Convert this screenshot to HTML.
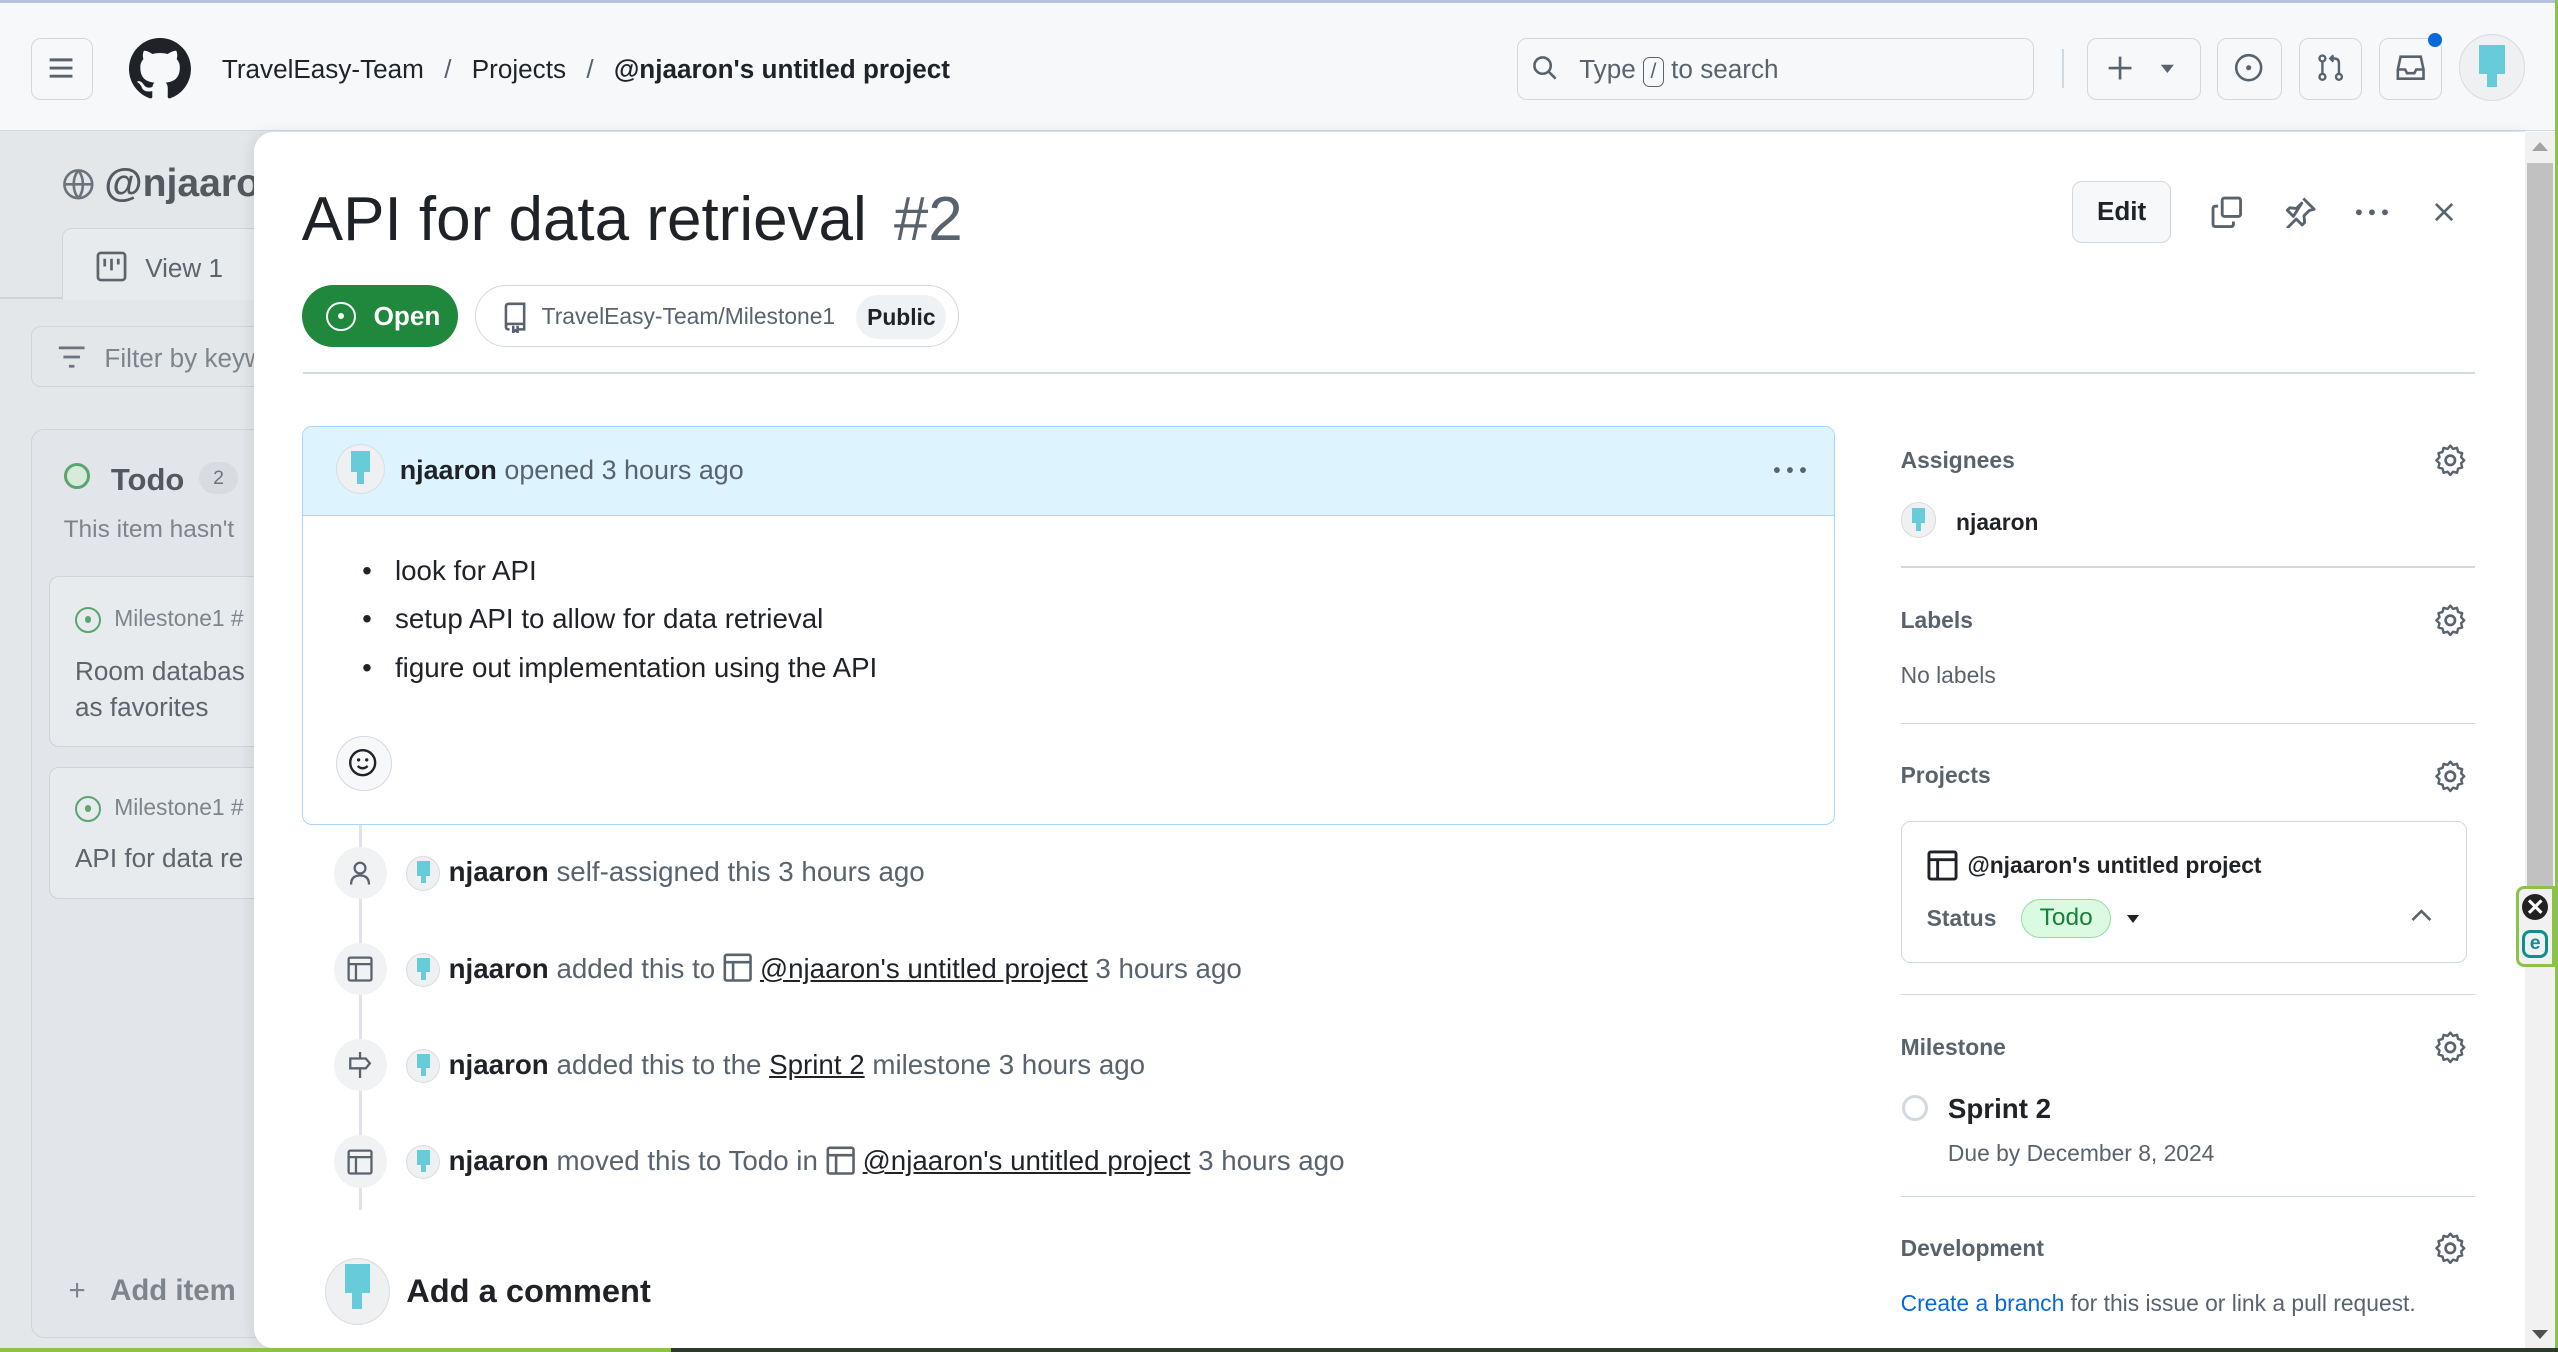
<!DOCTYPE html>
<html><head><meta charset="utf-8"><style>
html,body{margin:0;padding:0;width:2558px;height:1352px;overflow:hidden;background:#fff}
#z{zoom:1.6314;width:1568px;height:829px;position:relative;overflow:hidden;font-family:"Liberation Sans",sans-serif;color:#1f2328;font-size:14px}
.a{position:absolute}
.btn{position:absolute;border:1px solid #d1d9e0;border-radius:6px;background:#f6f8fa;box-sizing:border-box}
svg{display:block}
.av{position:absolute;border-radius:50%;background:#eef0f2;border:1px solid #d8dde2;box-sizing:border-box;overflow:hidden}
.av i{position:absolute;left:30%;top:12%;width:40%;height:45%;background:#67cbd9}
.av b{position:absolute;left:42%;top:55%;width:16%;height:25%;background:#67cbd9}
.side h4{position:absolute;margin:0;font-size:14px;font-weight:bold;color:#59636e;left:1165px}
.sep{position:absolute;left:1165px;width:352px;height:1px;background:#d1d9e0}
.gear{position:absolute;left:1492px}
.tl{position:absolute;left:205px;width:32px;height:32px;border-radius:50%;background:#f0f2f4}
.tl svg{margin:8px}
.tt{position:absolute;left:249px;font-size:17px;color:#59636e;white-space:nowrap}
.tt b{color:#1f2328}
.tt u{color:#1f2328;text-decoration:underline}
</style></head><body><div id="z">
<div class="a" style="left:0;top:0;width:1568px;height:80px;background:#f6f8fa;border-bottom:1px solid #d1d9e0;border-top:2px solid #b4c2dc;box-sizing:border-box"></div>
<div class="btn" style="left:19px;top:23px;width:38px;height:38px;background:#f6f8fa"><svg width="16" height="16" viewBox="0 0 16 16" style="margin:10px"><path d="M1 3h14M1 8h14M1 13h14" stroke="#59636e" stroke-width="1.8"/></svg></div>
<svg class="a" style="left:79px;top:23px" width="38" height="38" viewBox="0 0 16 16"><path fill="#1f2328" d="M8 0C3.58 0 0 3.58 0 8c0 3.540 2.290 6.530 5.470 7.590.4.07.55-.17.55-.38 0-.19-.01-.82-.01-1.49-2.010.37-2.530-.49-2.690-.94-.09-.23-.48-.94-.82-1.130-.28-.15-.68-.52-.01-.53.63-.01 1.080.58 1.230.82.72 1.210 1.870.87 2.330.66.07-.52.28-.87.51-1.070-1.780-.2-3.640-.89-3.640-3.950 0-.87.31-1.590.82-2.150-.08-.2-.36-1.020.08-2.120 0 0 .67-.21 2.200.82.64-.18 1.320-.27 2-.27.68 0 1.360.09 2 .27 1.530-1.040 2.200-.82 2.200-.82.44 1.100.16 1.920.08 2.120.51.56.82 1.270.82 2.150 0 3.070-1.870 3.750-3.650 3.950.29.25.54.73.54 1.480 0 1.070-.01 1.930-.01 2.200 0 .21.15.46.55.38A8.013 8.013 0 0016 8c0-4.420-3.580-8-8-8z"/></svg>
<div class="a" style="left:136px;top:33px;font-size:16px;white-space:nowrap">TravelEasy-Team <span style="color:#59636e;margin:0 8px">/</span> Projects <span style="color:#59636e;margin:0 8px">/</span> <b>@njaaron's untitled project</b></div>
<div class="a" style="left:930px;top:23px;width:317px;height:38px;border:1px solid #d1d9e0;border-radius:6px;box-sizing:border-box;background:#f6f8fa"></div>
<svg class="a" style="left:939px;top:34px" width="16" height="16" viewBox="0 0 16 16"><circle cx="6.5" cy="6.5" r="5" fill="none" stroke="#59636e" stroke-width="1.6"/><path d="M10.2 10.2L14.5 14.5" stroke="#59636e" stroke-width="1.6"/></svg>
<div class="a" style="left:968px;top:33px;font-size:16px;color:#59636e;white-space:nowrap">Type <span style="display:inline-block;border:1px solid #59636e;border-radius:4px;padding:0 4px;font-size:13px;line-height:17px">/</span> to search</div>
<div class="a" style="left:1264px;top:30px;width:1px;height:24px;background:#d1d9e0"></div>
<div class="btn" style="left:1279px;top:23px;width:70px;height:38px"><svg width="60" height="16" viewBox="0 0 60 16" style="margin:10px 0 0 12px"><path d="M8 1v14M1 8h14" stroke="#59636e" stroke-width="1.6"/><path d="M33 6h8l-4 5z" fill="#59636e"/></svg></div>
<div class="btn" style="left:1359px;top:23px;width:40px;height:38px"><svg width="18" height="18" viewBox="0 0 16 16" style="margin:9px 10px"><circle cx="8" cy="8" r="6.8" fill="none" stroke="#59636e" stroke-width="1.4"/><circle cx="8" cy="8" r="1.4" fill="#59636e"/></svg></div>
<div class="btn" style="left:1409px;top:23px;width:39px;height:38px"><svg width="18" height="18" viewBox="0 0 16 16" style="margin:9px 10px"><circle cx="3.5" cy="3" r="1.6" fill="none" stroke="#59636e" stroke-width="1.3"/><circle cx="3.5" cy="13" r="1.6" fill="none" stroke="#59636e" stroke-width="1.3"/><circle cx="12.5" cy="13" r="1.6" fill="none" stroke="#59636e" stroke-width="1.3"/><path d="M3.5 4.6v6.8M12.5 11.4V5.5Q12.5 3 10 3H8M9.5 1.3 7.8 3l1.7 1.7" fill="none" stroke="#59636e" stroke-width="1.3"/></svg></div>
<div class="btn" style="left:1458px;top:23px;width:39px;height:38px"><svg width="18" height="18" viewBox="0 0 16 16" style="margin:9px 10px"><path d="M2.5 2h11l1.5 7v5H1V9zM1 9h4l1 2h4l1-2h4" fill="none" stroke="#59636e" stroke-width="1.4"/></svg></div>
<div class="a" style="left:1488px;top:20px;width:9px;height:9px;border-radius:50%;background:#0969da"></div>
<div class="av" style="left:1507px;top:21px;width:41px;height:41px"><i style="top:15%"></i><b></b></div>
<div class="a" style="left:1566px;top:0;width:2px;height:829px;background:#8bc34a"></div>

<div class="a" style="left:0;top:80px;width:1548px;height:749px;background:#e4e7ea"></div>
<svg class="a" style="left:38px;top:103px" width="20" height="20" viewBox="0 0 16 16"><circle cx="8" cy="8" r="6.8" fill="none" stroke="#6b737c" stroke-width="1.3"/><path d="M1.2 8h13.6M8 1.2c-3 3.5-3 10 0 13.6M8 1.2c3 3.5 3 10 0 13.6" fill="none" stroke="#6b737c" stroke-width="1.3"/></svg>
<div class="a" style="left:64px;top:99px;font-size:24px;font-weight:bold;color:#53595f">@njaaron</div>
<div class="a" style="left:0;top:182px;width:38px;height:1px;background:#cfd4d9"></div>
<div class="a" style="left:38px;top:140px;width:140px;height:44px;border:1px solid #cfd4d9;border-bottom:none;border-radius:6px 6px 0 0;background:#e8ebee;box-sizing:border-box"></div>
<svg class="a" style="left:59px;top:154px" width="19" height="19" viewBox="0 0 16 16"><rect x="1" y="1" width="14" height="14" rx="1.5" fill="none" stroke="#5d646b" stroke-width="1.4"/><path d="M4.5 4v4M8 4v6M11.5 4v3" stroke="#5d646b" stroke-width="1.4"/></svg>
<div class="a" style="left:89px;top:155px;font-size:16px;color:#5d646b">View 1</div>
<div class="a" style="left:19px;top:200px;width:160px;height:37px;border:1px solid #cfd4d9;border-radius:6px;box-sizing:border-box"></div>
<svg class="a" style="left:35px;top:211px" width="18" height="16" viewBox="0 0 16 14"><path d="M1 2h14M3.5 7h9M6.5 12h3" stroke="#6b737c" stroke-width="1.5"/></svg>
<div class="a" style="left:64px;top:210px;font-size:16px;color:#7d858c;white-space:nowrap">Filter by keyword</div>
<div class="a" style="left:19px;top:263px;width:160px;height:557px;border:1px solid #cfd4d9;border-radius:8px;box-sizing:border-box;background:#e2e5e9"></div>
<div class="a" style="left:39px;top:284px;width:16px;height:16px;border:2px solid #5aa56f;border-radius:50%;box-sizing:border-box;background:#d6ebd9"></div>
<div class="a" style="left:68px;top:283px;font-size:19px;font-weight:bold;color:#53595f">Todo</div>
<div class="a" style="left:122px;top:283px;width:24px;height:20px;border-radius:10px;background:#d8dce0;font-size:12px;color:#6b737c;text-align:center;line-height:20px">2</div>
<div class="a" style="left:39px;top:316px;font-size:15px;color:#7d858c;white-space:nowrap">This item hasn't</div>
<div class="a" style="left:30px;top:353px;width:150px;height:105px;border:1px solid #cfd4d9;border-radius:6px;background:#e8ebee;box-sizing:border-box"></div>
<div class="a" style="left:30px;top:470px;width:150px;height:81px;border:1px solid #cfd4d9;border-radius:6px;background:#e8ebee;box-sizing:border-box"></div>
<div class="a" style="left:46px;top:372px;width:16px;height:16px;border:1.5px solid #5aa56f;border-radius:50%;box-sizing:border-box"><div style="width:4px;height:4px;background:#5aa56f;border-radius:50%;margin:4.5px auto"></div></div>
<div class="a" style="left:70px;top:371px;font-size:14px;color:#7d858c;white-space:nowrap">Milestone1 #</div>
<div class="a" style="left:46px;top:401px;font-size:16px;color:#5d646b;line-height:22px;white-space:nowrap">Room databas<br>as favorites</div>
<div class="a" style="left:46px;top:488px;width:16px;height:16px;border:1.5px solid #5aa56f;border-radius:50%;box-sizing:border-box"><div style="width:4px;height:4px;background:#5aa56f;border-radius:50%;margin:4.5px auto"></div></div>
<div class="a" style="left:70px;top:487px;font-size:14px;color:#7d858c;white-space:nowrap">Milestone1 #</div>
<div class="a" style="left:46px;top:517px;font-size:16px;color:#5d646b;white-space:nowrap">API for data re</div>
<div class="a" style="left:42px;top:781px;font-size:18px;color:#7d858c;white-space:nowrap">+&nbsp;&nbsp; <b>Add item</b></div>

<div class="a" style="left:156px;top:81px;width:1392px;height:745px;background:#fff;border-radius:12px 0 0 12px;box-shadow:-2px 0 8px rgba(0,0,0,.08)"></div>
<div class="a" style="left:1548px;top:81px;width:18px;height:748px;background:#f1f1f1"></div>
<div class="a" style="left:1549px;top:100px;width:16px;height:445px;background:#c1c1c1"></div>
<div class="a" style="left:1552px;top:87px;width:0;height:0;border:5px solid transparent;border-bottom:6px solid #a3a3a3;border-top:none"></div>
<div class="a" style="left:1552px;top:815px;width:0;height:0;border:5px solid transparent;border-top:6px solid #505050;border-bottom:none"></div>
<div class="a" style="left:1542px;top:543px;width:24px;height:50px;border:2px solid #8bc34a;border-radius:5px 0 0 5px;background:#f1f1f1;box-sizing:border-box"></div>
<div class="a" style="left:1546px;top:548px;width:16px;height:16px;border-radius:50%;background:#222;color:#fff;font-size:14px;font-weight:bold;text-align:center;line-height:16px">✕</div>
<div class="a" style="left:1546px;top:570px;width:16px;height:17px;border:2px solid #0f8f8f;border-radius:5px;box-sizing:border-box;color:#0f8f8f;font-size:12px;font-weight:bold;text-align:center;line-height:13px">e</div>

<div class="a" style="left:185px;top:113px;font-size:38px;white-space:nowrap">API for data retrieval <span style="color:#59636e;font-weight:300;margin-left:6px">#2</span></div>
<div class="btn" style="left:1270px;top:111px;width:61px;height:38px;font-size:16px;font-weight:bold;text-align:center;line-height:36px">Edit</div>
<svg class="a" style="left:1355px;top:120px" width="20" height="20" viewBox="0 0 16 16"><rect x="5.5" y="1" width="9" height="9" rx="1" fill="none" stroke="#59636e" stroke-width="1.4"/><path d="M3.5 5H2.2Q1 5 1 6.2v7.6Q1 15 2.2 15h7.6Q11 15 11 13.8V12.5" fill="none" stroke="#59636e" stroke-width="1.4"/></svg>
<svg class="a" style="left:1400px;top:120px" width="20" height="20" viewBox="0 0 16 16"><path d="M9.5 1.2l5.3 5.3-2.4.6-2.6 2.6.3 3.3-1.2 1.2L6 11.3l-4.5 4.5M4.6 10l-3-3 1.2-1.2 3.3.3 2.6-2.6z" fill="none" stroke="#59636e" stroke-width="1.4" stroke-linejoin="round"/></svg>
<svg class="a" style="left:1443px;top:120px" width="22" height="20" viewBox="0 0 22 20"><circle cx="3" cy="10" r="1.8" fill="#59636e"/><circle cx="11" cy="10" r="1.8" fill="#59636e"/><circle cx="19" cy="10" r="1.8" fill="#59636e"/></svg>
<svg class="a" style="left:1490px;top:122px" width="16" height="16" viewBox="0 0 16 16"><path d="M3 3l10 10M13 3L3 13" stroke="#59636e" stroke-width="1.6"/></svg>

<div class="a" style="left:185px;top:175px;width:96px;height:38px;border-radius:19px;background:#1f883d;color:#fff;font-size:16px;font-weight:bold;box-sizing:border-box;padding-left:44px;line-height:38px">Open</div>
<div class="a" style="left:200px;top:185px;width:18px;height:18px;border:1.6px solid #fff;border-radius:50%;box-sizing:border-box"><div style="width:4px;height:4px;background:#fff;border-radius:50%;margin:5.5px auto"></div></div>
<div class="a" style="left:291px;top:175px;width:297px;height:38px;border:1px solid #d1d9e0;border-radius:19px;box-sizing:border-box"></div>
<svg class="a" style="left:308px;top:185px" width="16" height="19" viewBox="0 0 14 17"><path d="M2 14V2.5Q2 1 3.5 1H12v11H3.5Q2 12 2 13.5Q2 15 3.5 15H4M6 13v3.5l1.2-1 1.2 1V13M12 12v3H9" fill="none" stroke="#59636e" stroke-width="1.4"/></svg>
<div class="a" style="left:332px;top:186px;font-size:14px;color:#59636e;white-space:nowrap">TravelEasy-Team/Milestone1</div>
<div class="a" style="left:525px;top:181px;width:55px;height:27px;border-radius:14px;background:#eff2f5;font-size:14px;font-weight:bold;text-align:center;line-height:27px">Public</div>
<div class="a" style="left:186px;top:228px;width:1331px;height:1px;background:#d1d9e0"></div>

<div class="a" style="left:185px;top:261px;width:940px;height:245px;border:1px solid #a8d6fa;border-radius:6px;box-sizing:border-box;overflow:hidden">
<div style="height:54px;background:#ddf4ff;border-bottom:1px solid #a8d6fa"></div></div>
<div class="av" style="left:206px;top:272px;width:30px;height:31px"><i></i><b></b></div>
<div class="a" style="left:245px;top:279px;font-size:16.5px;color:#59636e;white-space:nowrap"><b style="color:#1f2328">njaaron</b> opened 3 hours ago</div>
<svg class="a" style="left:1086px;top:280px" width="22" height="16" viewBox="0 0 22 16"><circle cx="3" cy="8" r="1.8" fill="#59636e"/><circle cx="11" cy="8" r="1.8" fill="#59636e"/><circle cx="19" cy="8" r="1.8" fill="#59636e"/></svg>
<div class="a" style="left:222px;top:335px;font-size:17px;line-height:30px;white-space:nowrap">
<div>•&nbsp;&nbsp; look for API</div><div>•&nbsp;&nbsp; setup API to allow for data retrieval</div><div>•&nbsp;&nbsp; figure out implementation using the API</div></div>
<div class="a" style="left:206px;top:451px;width:34px;height:34px;border:1px solid #d1d9e0;border-radius:50%;background:#f6f8fa;box-sizing:border-box"><svg width="18" height="18" viewBox="0 0 16 16" style="margin:7px"><circle cx="8" cy="8" r="6.8" fill="none" stroke="#1f2328" stroke-width="1.3"/><circle cx="5.8" cy="6.5" r=".9" fill="#1f2328"/><circle cx="10.2" cy="6.5" r=".9" fill="#1f2328"/><path d="M5.3 9.8Q8 12.3 10.7 9.8" fill="none" stroke="#1f2328" stroke-width="1.3"/></svg></div>

<div class="a" style="left:220px;top:506px;width:2px;height:236px;background:#dfe3e8"></div>
<div class="tl" style="top:519px"><svg width="16" height="16" viewBox="0 0 16 16"><circle cx="8" cy="5" r="3.3" fill="none" stroke="#59636e" stroke-width="1.4"/><path d="M2.5 15q0-5.5 5.5-5.5t5.5 5.5" fill="none" stroke="#59636e" stroke-width="1.4"/></svg></div>
<div class="tl" style="top:578px"><svg width="16" height="16" viewBox="0 0 16 16"><rect x="1" y="1" width="14" height="14" rx="1" fill="none" stroke="#59636e" stroke-width="1.4"/><path d="M1 5h14M5.5 5v10" stroke="#59636e" stroke-width="1.4"/></svg></div>
<div class="tl" style="top:637px"><svg width="16" height="16" viewBox="0 0 16 16"><path d="M8 0v4M8 10v6M2 4h9.5l2.5 3-2.5 3H2z" fill="none" stroke="#59636e" stroke-width="1.4"/></svg></div>
<div class="tl" style="top:696px"><svg width="16" height="16" viewBox="0 0 16 16"><rect x="1" y="1" width="14" height="14" rx="1" fill="none" stroke="#59636e" stroke-width="1.4"/><path d="M1 5h14M5.5 5v10" stroke="#59636e" stroke-width="1.4"/></svg></div>
<div class="av" style="left:249px;top:525px;width:21px;height:21px"><i></i><b></b></div>
<div class="av" style="left:249px;top:584px;width:21px;height:21px"><i></i><b></b></div>
<div class="av" style="left:249px;top:643px;width:21px;height:21px"><i></i><b></b></div>
<div class="av" style="left:249px;top:702px;width:21px;height:21px"><i></i><b></b></div>
<div class="tt" style="left:275px;top:525px"><b>njaaron</b> self-assigned this 3 hours ago</div>
<div class="tt" style="left:275px;top:584px"><b>njaaron</b> added this to <svg style="display:inline;vertical-align:-3px" width="18" height="18" viewBox="0 0 16 16"><rect x="1" y="1" width="14" height="14" rx="1" fill="none" stroke="#59636e" stroke-width="1.4"/><path d="M1 5h14M5.5 5v10" stroke="#59636e" stroke-width="1.4"/></svg> <u>@njaaron's untitled project</u> 3 hours ago</div>
<div class="tt" style="left:275px;top:643px"><b>njaaron</b> added this to the <u>Sprint 2</u> milestone 3 hours ago</div>
<div class="tt" style="left:275px;top:702px"><b>njaaron</b> moved this to Todo in <svg style="display:inline;vertical-align:-3px" width="18" height="18" viewBox="0 0 16 16"><rect x="1" y="1" width="14" height="14" rx="1" fill="none" stroke="#59636e" stroke-width="1.4"/><path d="M1 5h14M5.5 5v10" stroke="#59636e" stroke-width="1.4"/></svg> <u>@njaaron's untitled project</u> 3 hours ago</div>
<div class="av" style="left:199px;top:771px;width:40px;height:41px"><i style="top:8%"></i><b style="top:53%"></b></div>
<div class="a" style="left:249px;top:780px;font-size:20px;font-weight:bold">Add a comment</div>

<div class="side">
<h4 style="top:274px">Assignees</h4>
<div class="av" style="left:1165px;top:308px;width:22px;height:22px"><i></i><b></b></div>
<div class="a" style="left:1199px;top:312px;font-size:14px;font-weight:bold">njaaron</div>
<div class="sep" style="top:347px"></div>
<h4 style="top:372px">Labels</h4>
<div class="a" style="left:1165px;top:406px;font-size:14px;color:#59636e">No labels</div>
<div class="sep" style="top:443px"></div>
<h4 style="top:467px">Projects</h4>
<div class="a" style="left:1165px;top:503px;width:347px;height:87px;border:1px solid #d1d9e0;border-radius:6px;box-sizing:border-box"></div>
<svg class="a" style="left:1181px;top:521px" width="19" height="19" viewBox="0 0 16 16"><rect x="1" y="1" width="14" height="14" rx="1" fill="none" stroke="#1f2328" stroke-width="1.5"/><path d="M1 5h14M5.5 5v10" stroke="#1f2328" stroke-width="1.5"/></svg>
<div class="a" style="left:1206px;top:522px;font-size:14px;font-weight:bold">@njaaron's untitled project</div>
<div class="a" style="left:1181px;top:555px;font-size:14px;color:#59636e;font-weight:bold">Status</div>
<div class="a" style="left:1239px;top:551px;width:55px;height:24px;border:1px solid #8fdca3;border-radius:12px;background:#dafbe1;box-sizing:border-box;color:#1a7f37;font-size:15px;text-align:center;line-height:22px">Todo</div>
<div class="a" style="left:1304px;top:561px;border:4px solid transparent;border-top:5px solid #1f2328;border-bottom:none"></div>
<svg class="a" style="left:1477px;top:556px" width="14" height="10" viewBox="0 0 14 10"><path d="M1.5 8L7 2.5 12.5 8" fill="none" stroke="#59636e" stroke-width="1.6"/></svg>
<div class="sep" style="top:609px"></div>
<h4 style="top:634px">Milestone</h4>
<div class="a" style="left:1166px;top:671px;width:16px;height:16px;border:2px solid #d1d9e0;border-radius:50%;box-sizing:border-box"></div>
<div class="a" style="left:1194px;top:670px;font-size:17px;font-weight:bold">Sprint 2</div>
<div class="a" style="left:1194px;top:699px;font-size:14px;color:#59636e">Due by December 8, 2024</div>
<div class="sep" style="top:733px"></div>
<h4 style="top:757px">Development</h4>
<div class="a" style="left:1165px;top:791px;font-size:14px;color:#59636e;white-space:nowrap"><span style="color:#0969da">Create a branch</span> for this issue or link a pull request.</div>
</div>
<svg class="gear" style="top:272px" width="20" height="20" viewBox="0 0 16 16"><path d="M8 0.8l1.3 1.6 2-.5.5 2 2 .6-.5 2 1.5 1.5-1.5 1.5.5 2-2 .6-.5 2-2-.5L8 15.2l-1.3-1.6-2 .5-.5-2-2-.6.5-2L1.2 8l1.5-1.5-.5-2 2-.6.5-2 2 .5z" fill="none" stroke="#59636e" stroke-width="1.2" stroke-linejoin="round"/><circle cx="8" cy="8" r="2.3" fill="none" stroke="#59636e" stroke-width="1.3"/></svg>
<svg class="gear" style="top:370px" width="20" height="20" viewBox="0 0 16 16"><path d="M8 0.8l1.3 1.6 2-.5.5 2 2 .6-.5 2 1.5 1.5-1.5 1.5.5 2-2 .6-.5 2-2-.5L8 15.2l-1.3-1.6-2 .5-.5-2-2-.6.5-2L1.2 8l1.5-1.5-.5-2 2-.6.5-2 2 .5z" fill="none" stroke="#59636e" stroke-width="1.2" stroke-linejoin="round"/><circle cx="8" cy="8" r="2.3" fill="none" stroke="#59636e" stroke-width="1.3"/></svg>
<svg class="gear" style="top:466px" width="20" height="20" viewBox="0 0 16 16"><path d="M8 0.8l1.3 1.6 2-.5.5 2 2 .6-.5 2 1.5 1.5-1.5 1.5.5 2-2 .6-.5 2-2-.5L8 15.2l-1.3-1.6-2 .5-.5-2-2-.6.5-2L1.2 8l1.5-1.5-.5-2 2-.6.5-2 2 .5z" fill="none" stroke="#59636e" stroke-width="1.2" stroke-linejoin="round"/><circle cx="8" cy="8" r="2.3" fill="none" stroke="#59636e" stroke-width="1.3"/></svg>
<svg class="gear" style="top:632px" width="20" height="20" viewBox="0 0 16 16"><path d="M8 0.8l1.3 1.6 2-.5.5 2 2 .6-.5 2 1.5 1.5-1.5 1.5.5 2-2 .6-.5 2-2-.5L8 15.2l-1.3-1.6-2 .5-.5-2-2-.6.5-2L1.2 8l1.5-1.5-.5-2 2-.6.5-2 2 .5z" fill="none" stroke="#59636e" stroke-width="1.2" stroke-linejoin="round"/><circle cx="8" cy="8" r="2.3" fill="none" stroke="#59636e" stroke-width="1.3"/></svg>
<svg class="gear" style="top:755px" width="20" height="20" viewBox="0 0 16 16"><path d="M8 0.8l1.3 1.6 2-.5.5 2 2 .6-.5 2 1.5 1.5-1.5 1.5.5 2-2 .6-.5 2-2-.5L8 15.2l-1.3-1.6-2 .5-.5-2-2-.6.5-2L1.2 8l1.5-1.5-.5-2 2-.6.5-2 2 .5z" fill="none" stroke="#59636e" stroke-width="1.2" stroke-linejoin="round"/><circle cx="8" cy="8" r="2.3" fill="none" stroke="#59636e" stroke-width="1.3"/></svg>

<div class="a" style="left:0;top:826px;width:1568px;height:3px;background:#8bc34a"></div>
<div class="a" style="left:411px;top:826px;width:1157px;height:3px;background:#2b3a2b"></div>
</div></body></html>
